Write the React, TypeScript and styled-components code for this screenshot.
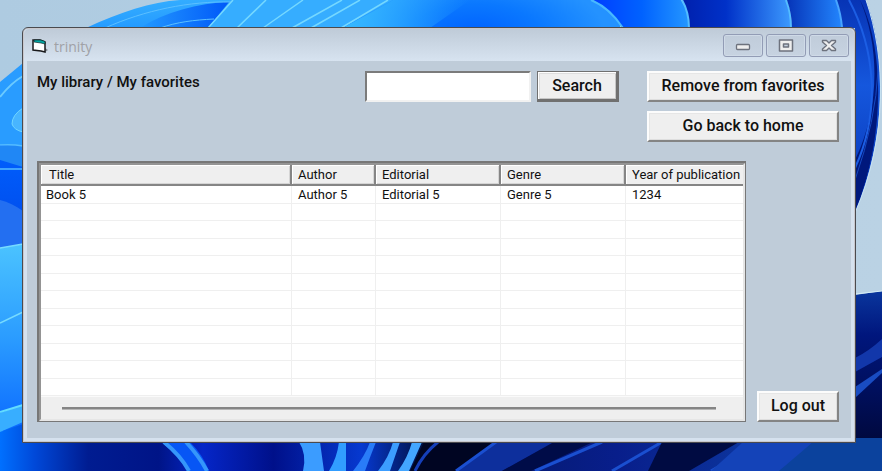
import React from "react";
import styled, { createGlobalStyle, css } from "styled-components";

const GlobalStyle = createGlobalStyle`
  * { box-sizing: border-box; }
  body { margin: 0; background: #b4cde1; }
  button, input { font: inherit; color: inherit; }
`;

const Desktop = styled.main`
  position: relative;
  min-height: 100vh;
  padding: 27px 26px 28px 22px;
  display: flex;
  overflow: hidden;
  font-family: Roboto, "Liberation Sans", sans-serif;
  color: #111;
`;

const WallpaperArt = styled.svg`
  position: absolute;
  inset: 0;
  width: 100%;
  height: 100%;
`;

const Window = styled.section`
  position: relative;
  flex: 1;
  min-width: 0;
  display: flex;
  flex-direction: column;
  border: 1px solid #4a4a4e;
  border-radius: 6px 6px 0 0;
  background: #d5e1ee;
  padding: 0 4px 4px;
  box-shadow: inset 0 0 0 1px #c9c8cd;
`;

const TitleBar = styled.header`
  height: 32px;
  margin: 1px -3px 0;
  padding: 1px 5px 0 8px;
  display: flex;
  align-items: center;
  border-radius: 5px 5px 0 0;
  background: linear-gradient(#bfcbd8, #d7e3f0);
`;

const AppIcon = styled.svg`
  width: 17px;
  height: 16px;
  margin-right: 5px;
`;

const WindowTitle = styled.h1`
  margin: 0;
  padding-top: 2px;
  flex: 1;
  font: 400 14px/20px "Open Sans", "Noto Sans", sans-serif;
  color: #a0a1a6;
`;

const CaptionButtons = styled.div`
  display: flex;
  gap: 3px;
`;

const CaptionButton = styled.button`
  width: 40px;
  height: 23px;
  padding: 0;
  display: grid;
  place-items: center;
  border: 1px solid #929cb5;
  border-radius: 3px;
  background: linear-gradient(#c0ccda, #c7d3e1);
  box-shadow: inset 0 0 0 1px #cfdae7;
`;

const Form = styled.div`
  flex: 1;
  display: flex;
  flex-direction: column;
  gap: 19px;
  padding: 10px 12px 16px 10px;
  background: #bfccd9;
`;

const TopRow = styled.div`
  display: flex;
  align-items: flex-start;
`;

const Breadcrumb = styled.h2`
  margin: 0;
  flex: 1;
  font-size: 15px;
  line-height: 22px;
  font-weight: 500;
`;

const SearchForm = styled.form`
  display: flex;
  gap: 6px;
  margin-right: 28px;
`;

const SearchInput = styled.input`
  width: 166px;
  height: 31px;
  padding: 0 6px;
  font-size: 15px;
  background: #fff;
  border: 2px solid;
  border-color: #7b7b7b #f1f1f1 #f1f1f1 #7b7b7b;
  border-radius: 0;
  outline: none;
`;

const Actions = styled.div`
  width: 192px;
  display: flex;
  flex-direction: column;
  gap: 9px;
`;

const PushButton = styled.button<{ $width?: number; $isDefault?: boolean }>`
  width: ${(p) => (p.$width ? `${p.$width}px` : "100%")};
  height: 31px;
  padding: 0 0 2px;
  font-size: 16px;
  font-weight: 500;
  white-space: nowrap;
  background: #efefef;
  border: 2px solid;
  border-color: #fcfcfc #848484 #848484 #fcfcfc;
  border-radius: 0;
  box-shadow: inset -1px -1px #dedede, inset 1px 1px #e6e6e6;
  ${(p) =>
    p.$isDefault &&
    css`
      padding-bottom: 0;
      border-color: #707070;
      border-width: 1px 3px 3px 1px;
      box-shadow: inset 1px 1px #fff, inset 2px 2px #ddd, inset -1px -1px #c6c6c6;
    `}
`;

const BottomRow = styled.div`
  display: flex;
  align-items: flex-end;
  gap: 11px;
`;

const ListView = styled.div`
  flex: 1;
  min-width: 0;
  overflow: hidden;
  background: #fff;
  border-style: solid;
  border-width: 2px 1px 1px 2px;
  border-color: #777;
`;

const ListInner = styled.div`
  border-style: solid;
  border-width: 2px;
  border-color: #949494 #e6e6e6 #e6e6e6 #949494;
`;

const Table = styled.table`
  width: 100%;
  table-layout: fixed;
  border-collapse: separate;
  border-spacing: 0;
  font-size: 13px;
  line-height: 16px;
`;

const HeadCell = styled.th`
  height: 21px;
  padding: 1px 0 0 6px;
  text-align: left;
  font-weight: 400;
  white-space: nowrap;
  overflow: hidden;
  background: #efefef;
  border-bottom: 2px solid #858585;
  border-right: 2px solid #858585;
  box-shadow: inset 1px 1px #fff, inset -1px -1px #d5d5d5;
  &:first-child { padding-left: 8px; }
  &:last-child { border-right: 0; box-shadow: inset 1px 1px #fff; }
`;

const Row = styled.tr`
  height: 17px;
  &:nth-child(odd) { height: 18px; }
`;

const Cell = styled.td`
  padding: 0 0 0 6px;
  white-space: nowrap;
  border-bottom: 1px solid #efefef;
  border-right: 1px solid #efefef;
  &:first-child { padding-left: 5px; }
  &:last-child { border-right: 0; }
`;

const ScrollArea = styled.div`
  height: 23px;
  padding: 0 27px 0 21px;
  display: flex;
  align-items: center;
  background: #efefef;
  border-top: 1px solid #fafafa;
`;

const ScrollTrack = styled.div`
  flex: 1;
  height: 3px;
  background: #858585;
  border-bottom: 1px solid #b6b6b6;
`;

const columns = [
  { label: "Title", width: 251 },
  { label: "Author", width: 84 },
  { label: "Editorial", width: 125 },
  { label: "Genre", width: 125 },
  { label: "Year of publication" },
];

const books = [["Book 5", "Author 5", "Editorial 5", "Genre 5", "1234"]];
const visibleRows = 12;
const rows = Array.from({ length: visibleRows }, (_, i) => books[i] ?? columns.map(() => ""));

function Wallpaper() {
  return (
    <WallpaperArt viewBox="0 0 882 471" preserveAspectRatio="none" aria-hidden="true">
      <defs>
        <linearGradient id="sky" x1="0" y1="0" x2="1" y2="0">
          <stop offset="0" stopColor="#aecbe1" />
          <stop offset="1" stopColor="#bad2e4" />
        </linearGradient>
        <linearGradient id="azure" x1="0" y1="0" x2="1" y2="1">
          <stop offset="0" stopColor="#36b0ff" />
          <stop offset="1" stopColor="#1688ff" />
        </linearGradient>
        <linearGradient id="fold" x1="0" y1="0" x2="1" y2="0">
          <stop offset="0" stopColor="#249aff" />
          <stop offset="1" stopColor="#0058f8" />
        </linearGradient>
        <linearGradient id="sheen" x1="0" y1="0" x2="1" y2="0">
          <stop offset="0" stopColor="#36b9ff" />
          <stop offset="1" stopColor="#36b9ff" stopOpacity="0" />
        </linearGradient>
        <radialGradient id="core" gradientUnits="userSpaceOnUse" cx="475" cy="34" r="130" gradientTransform="translate(0 18) scale(1 .45)">
          <stop offset="0" stopColor="#0061ff" />
          <stop offset=".5" stopColor="#0a78ff" />
          <stop offset="1" stopColor="#2492ff" />
        </radialGradient>
        <linearGradient id="petal1" x1="0" y1="0" x2="1" y2="0">
          <stop offset="0" stopColor="#003dff" />
          <stop offset=".5" stopColor="#0062ff" />
          <stop offset="1" stopColor="#279aff" />
        </linearGradient>
        <linearGradient id="petal2" x1="0" y1="0" x2="1" y2="0">
          <stop offset="0" stopColor="#0020ad" />
          <stop offset=".4" stopColor="#0031c8" />
          <stop offset="1" stopColor="#3d9bff" />
        </linearGradient>
        <linearGradient id="petal3" x1="0" y1="0" x2="1" y2="0">
          <stop offset="0" stopColor="#0634b8" />
          <stop offset="1" stopColor="#2387ff" />
        </linearGradient>
        <linearGradient id="edge" x1="0" y1="0" x2="0" y2="1">
          <stop offset="0" stopColor="#0734b5" />
          <stop offset=".4" stopColor="#1557dd" />
          <stop offset="1" stopColor="#0633b4" />
        </linearGradient>
        <linearGradient id="deep" x1="0" y1="0" x2="0" y2="1">
          <stop offset="0" stopColor="#0a369d" />
          <stop offset=".3" stopColor="#00167d" />
          <stop offset="1" stopColor="#000940" />
        </linearGradient>
        <linearGradient id="leftMid" x1="0" y1="0" x2="0" y2="1">
          <stop offset="0" stopColor="#0060ff" />
          <stop offset="1" stopColor="#0049e8" />
        </linearGradient>
        <linearGradient id="leftLow" x1="0" y1="0" x2="0" y2="1">
          <stop offset="0" stopColor="#4bc3ff" />
          <stop offset=".5" stopColor="#2b9cff" />
          <stop offset="1" stopColor="#0b6aff" />
        </linearGradient>
        <linearGradient id="floor" gradientUnits="userSpaceOnUse" x1="0" y1="0" x2="882" y2="0">
          <stop offset="0" stopColor="#0070ff" />
          <stop offset=".04" stopColor="#0048d8" />
          <stop offset=".1" stopColor="#001c91" />
          <stop offset=".18" stopColor="#001487" />
          <stop offset=".23" stopColor="#0526c8" />
          <stop offset=".31" stopColor="#00108a" />
          <stop offset=".41" stopColor="#0639d0" />
          <stop offset=".5" stopColor="#00051c" />
          <stop offset=".6" stopColor="#061b77" />
          <stop offset=".7" stopColor="#081e8b" />
          <stop offset="1" stopColor="#104bae" />
        </linearGradient>
      </defs>
      <rect width="882" height="471" fill="url(#sky)" />

      <path d="M86 28C120 12 151 2 180 0H600V28Z" fill="url(#azure)" />
      <path d="M140 28C165 12 198 3 229 2L208 28Z" fill="url(#fold)" />
      <path d="M105 28C145 10 190 1 231 2M160 28C177 22 194 20 214 19" fill="none" stroke="#5cc0ff" />
      <path d="M208 28L233 0H392L342 28Z" fill="#36adff" />
      <path d="M208 28L233 0M237 28L266 0M263 28L303 0M292 28L342 0M311 28L360 0M341 28L388 0" fill="none" stroke="#75d8ff" strokeWidth="1.5" />
      <path d="M343 28C364 16 385 5 393 0H620V28Z" fill="url(#core)" />
      <path d="M343 28C364 16 385 5 393 0H470L430 28Z" fill="url(#sheen)" />
      <path d="M592 0C606 6 615 16 623 28H692C688 12 684 5 681 0Z" fill="url(#petal1)" />
      <path d="M591 0C606 6 615 16 623 28" fill="none" stroke="#48b8ff" strokeWidth="2" />
      <path d="M682 0Q689 11 689 28H792Q791 10 786 0Z" fill="url(#petal2)" />
      <path d="M682 0Q689 12 689 28M786 0Q791 12 791 28" fill="none" stroke="#54bdff" strokeWidth="2" />
      <path d="M787 0Q792 14 792 28H843Q840 11 836 0Z" fill="url(#petal3)" />
      <path d="M836 0H866C879 34 883 78 878 126C873 164 864 191 855 213V28H843Z" fill="url(#edge)" />
      <path d="M836 0Q841 14 842 28" fill="none" stroke="#48a5ff" strokeWidth="2" />
      <path d="M860 0C884 46 886 137 855 211V160C880 109 880 47 860 0Z" fill="#00187c" />
      <path d="M849 0C874 47 882 109 855 168" fill="none" stroke="#1c5ee4" strokeWidth="2" />
      <path d="M878 70Q876 120 855 180" fill="none" stroke="#1548c0" />
      <path d="M866 0C886 58 888 137 855 213" fill="none" stroke="#c8e3f2" />

      <path d="M0 82L23 63V471H0Z" fill="#299cff" />
      <path d="M0 97Q11 83 23 76" fill="none" stroke="#6bcaff" strokeWidth="2" />
      <path d="M23 108Q12 115 12 124Q14 130 23 132Z" fill="#48b5ff" stroke="#71d6ff" />
      <path d="M0 145Q12 144 23 146V244H0Z" fill="url(#leftMid)" />
      <path d="M0 146Q12 144 23 146V167L0 160Z" fill="#2087f5" />
      <path d="M0 145Q12 144 23 146M0 169H23" fill="none" stroke="#54bcff" strokeWidth="1.5" />
      <path d="M0 200Q12 203 23 211V244L0 248Z" fill="#236ff1" />
      <path d="M0 248L23 244V431H0Z" fill="url(#leftLow)" />
      <path d="M0 248L23 244M0 323L23 312" fill="none" stroke="#77dbff" strokeWidth="1.5" />
      <path d="M0 413L23 405V422L0 432Z" fill="#38aeff" />
      <path d="M0 412L23 405" fill="none" stroke="#62dcff" strokeWidth="2" />

      <path d="M0 432L23 424V442H882V471H0Z" fill="url(#floor)" />
      <path d="M161 442H190Q203 455 209 471H188Q178 455 161 442Z" fill="#0756f5" />
      <path d="M164 442Q181 456 189 471M186 442Q199 456 207 471" fill="none" stroke="#3596fb" strokeWidth="4" />
      <path d="M299 442H320L324 471H303Q307 454 299 442Z" fill="#3b9cff" />
      <path d="M339 442H346V471H329Q337 458 339 442Z" fill="#319dff" />
      <path d="M370 442H376Q370 457 365 471H353Q365 456 370 442Z" fill="#297cf8" />
      <path d="M393 442H400L390 471H378Q389 457 393 442Z" fill="#3c9dff" />
      <path d="M412 442H422L409 471H398Q408 457 412 442Z" fill="#43a6ff" />
      <path d="M424 442H497L456 471H410Z" fill="#000522" />
      <path d="M438 442Q423 454 415 471" fill="none" stroke="#153fb9" strokeWidth="3" />
      <path d="M496 442H554L502 471H456Z" fill="#0d2f9c" />
      <path d="M554 442H593L531 471H502Z" fill="#000c48" />
      <path d="M456 471L496 442M535 471L602 442M612 471L662 442M711 471L761 442" fill="none" stroke="#1a4fd0" strokeWidth="3" />
      <path d="M662 442H739L689 471H648Z" fill="#000b42" />
      <path d="M743 442H813Q798 458 779 471H711Z" fill="#1443b8" />

      <path d="M855 295L882 291V438H855Z" fill="url(#deep)" />
      <path d="M855 294L882 291" fill="none" stroke="#d4edf7" />
      <path d="M855 358Q869 351 882 339V357L855 372Z" fill="#1237aa" />
      <path d="M855 387L882 369V373L855 398Z" fill="#194cc2" />
      <path d="M855 438H882V471H779L813 442H855Z" fill="#0b429d" />
    </WallpaperArt>
  );
}

function FormIcon() {
  return (
    <AppIcon viewBox="0 0 17 16" aria-hidden="true">
      <path d="M13 10L16 12L13 14Z" fill="#7e858c" />
      <path d="M1 2L8 2L13 4V14L9 13L1 12Z" fill="#fff" stroke="#18191b" strokeWidth="1.5" />
      <path d="M2 2H9L13 3.5V6L9 5L2 4Z" fill="#00a7a4" stroke="#102a2a" strokeWidth=".7" />
    </AppIcon>
  );
}

export default function App() {
  return (
    <>
      <GlobalStyle />
      <Desktop>
        <Wallpaper />
        <Window aria-label="trinity">
          <TitleBar>
            <FormIcon />
            <WindowTitle>trinity</WindowTitle>
            <CaptionButtons>
              <CaptionButton type="button" aria-label="Minimize">
                <svg width="16" height="14" viewBox="0 0 16 14">
                  <rect x="1.5" y="5.5" width="13" height="5" rx="1" fill="#eee" stroke="#6d727d" strokeWidth="1.3" />
                </svg>
              </CaptionButton>
              <CaptionButton type="button" aria-label="Maximize">
                <svg width="16" height="14" viewBox="0 0 16 14">
                  <path fillRule="evenodd" d="M1.5 1H14.5V12H1.5ZM5.5 5V8H10.5V5Z" fill="#eee" stroke="#6d727d" strokeWidth="1.5" strokeLinejoin="round" />
                </svg>
              </CaptionButton>
              <CaptionButton type="button" aria-label="Close">
                <svg width="16" height="14" viewBox="0 0 16 14">
                  <path d="M1.5 1.5H5.5L8 4L10.5 1.5H14.5V3L10.5 6.5L14.5 10V11.5H10.5L8 9L5.5 11.5H1.5V10L5.5 6.5L1.5 3Z" fill="#eee" stroke="#6d727d" strokeWidth="1.4" strokeLinejoin="round" />
                </svg>
              </CaptionButton>
            </CaptionButtons>
          </TitleBar>
          <Form>
            <TopRow>
              <Breadcrumb>My library / My favorites</Breadcrumb>
              <SearchForm onSubmit={(e) => e.preventDefault()}>
                <SearchInput type="text" aria-label="Search" />
                <PushButton type="submit" $width={82} $isDefault>Search</PushButton>
              </SearchForm>
              <Actions>
                <PushButton type="button">Remove from favorites</PushButton>
                <PushButton type="button">Go back to home</PushButton>
              </Actions>
            </TopRow>
            <BottomRow>
              <ListView>
                <ListInner>
                  <Table>
                    <colgroup>
                      {columns.map((c) => <col key={c.label} width={c.width} />)}
                    </colgroup>
                    <thead>
                      <tr>{columns.map((c) => <HeadCell key={c.label} scope="col">{c.label}</HeadCell>)}</tr>
                    </thead>
                    <tbody>
                      {rows.map((row, r) => (
                        <Row key={r}>{row.map((value, i) => <Cell key={i}>{value}</Cell>)}</Row>
                      ))}
                    </tbody>
                  </Table>
                  <ScrollArea><ScrollTrack /></ScrollArea>
                </ListInner>
              </ListView>
              <PushButton type="button" $width={82}>Log out</PushButton>
            </BottomRow>
          </Form>
        </Window>
      </Desktop>
    </>
  );
}
